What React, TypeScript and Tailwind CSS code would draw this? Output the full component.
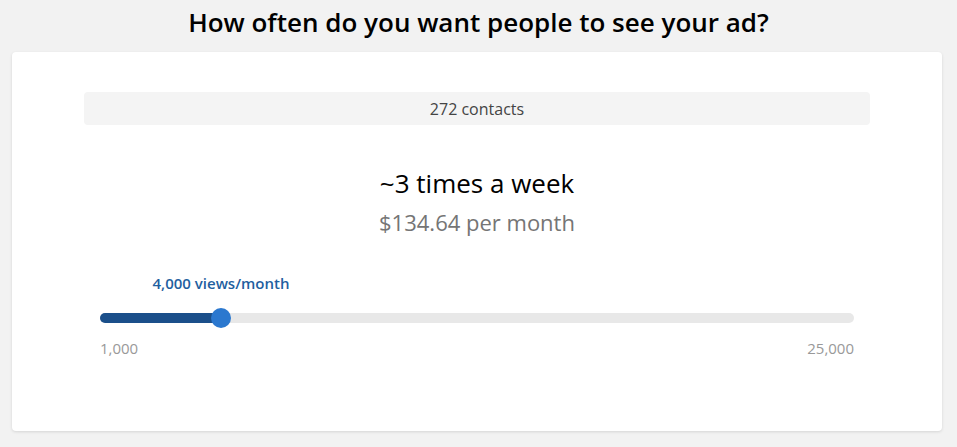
export default function App() {
  const fillPx = 121

  return (
    <div
      className="h-[447px] w-[957px] bg-[#f2f2f2] overflow-hidden"
      style={{ fontFamily: '"Open Sans", sans-serif' }}
    >
      {/* Heading */}
      <h1 className="h-[52px] pt-[3px] text-center text-[26px] font-semibold leading-[38px] text-black">
        How often do you want people to see your ad?
      </h1>

      {/* Card */}
      <div className="ml-3 h-[379px] w-[930px] rounded-[4px] bg-white px-[72px] pt-[40px] shadow-[0_1px_3px_rgba(0,0,0,0.12)]">
        <div className="flex h-[33px] items-center justify-center rounded-[4px] bg-[#f4f4f4] text-[16px] text-[#444]">
          272 contacts
        </div>

        <div className="mt-[42px] text-center text-[26px] leading-[32px] text-black">~3 times a week</div>
        <div className="mt-[9px] text-center text-[22px] leading-[28px] text-[#757575]">$134.64 per month</div>

        {/* Slider */}
        <div className="mx-4 mt-[36px]">
          <div className="relative h-[22px]">
            <span
              className="absolute top-0 -translate-x-1/2 whitespace-nowrap text-[15px] font-semibold leading-[22px] text-[#1f5fa0]"
              style={{ left: fillPx }}
            >
              4,000 views/month
            </span>
          </div>
          <div className="relative mt-[19px] h-[10px] rounded-full bg-[#e8e8e8]">
            <div className="h-full rounded-full bg-[#1b4f8a]" style={{ width: fillPx }} />
            <div
              className="absolute top-1/2 h-[20px] w-[20px] -translate-x-1/2 -translate-y-1/2 rounded-full bg-[#2b78cf]"
              style={{ left: fillPx }}
            />
          </div>
          <div className="mt-[15px] flex justify-between text-[15px] leading-[20px] text-[#999]">
            <span>1,000</span>
            <span>25,000</span>
          </div>
        </div>
      </div>
    </div>
  )
}
